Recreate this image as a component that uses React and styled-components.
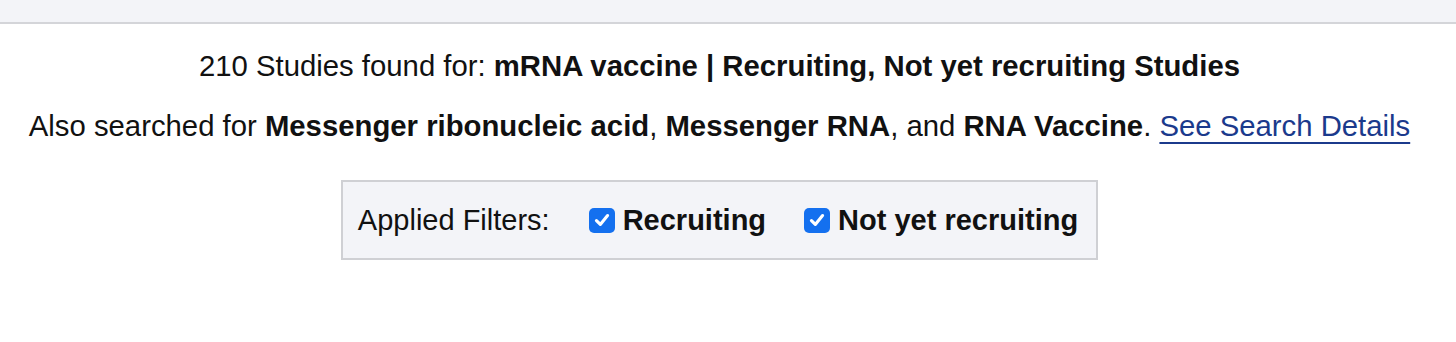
import React from 'react';
import styled, { createGlobalStyle } from 'styled-components';

const GlobalStyle = createGlobalStyle`
  body {
    margin: 0;
    background: #fff;
    font-family: "Liberation Sans", Arial, Helvetica, sans-serif;
    color: #111;
  }
`;

const TopBar = styled.div`
  height: 22px;
  background: #f3f4f8;
  border-bottom: 2px solid #d4d5d9;
`;

const Results = styled.section`
  display: flex;
  flex-direction: column;
  align-items: center;
  padding: 25px 17px 0 0;
`;

const Heading = styled.p`
  margin: 0;
  font-size: 29.3px;
  line-height: 34px;
`;

const AlsoSearched = styled.p`
  margin: 25px 0 0;
  font-size: 29.3px;
  line-height: 36px;
`;

const DetailsLink = styled.a`
  color: #1b3a8c;
  text-decoration: underline;
  text-decoration-thickness: 2px;
  text-underline-offset: 6px;
  cursor: pointer;
`;

const FilterBox = styled.div`
  box-sizing: border-box;
  display: flex;
  align-items: center;
  gap: 38px;
  margin-top: 36px;
  height: 80px;
  padding: 0 18px 0 15px;
  background: #f3f4f8;
  border: 2px solid #cfd0d4;
  font-size: 29px;
`;

const FilterLabel = styled.span`
  margin-right: 1px;
`;

const FilterOption = styled.label`
  display: flex;
  align-items: center;
  gap: 8px;
  font-weight: bold;
`;

const Box = styled.span`
  width: 26px;
  height: 25px;
  border-radius: 5px;
  background: #1470ef;
  display: flex;
  align-items: center;
  justify-content: center;
`;

const Check = () => (
  <svg width="20" height="20" viewBox="0 0 18 18">
    <path
      d="M4 9.5 L7.5 13 L14 5"
      fill="none"
      stroke="#fff"
      strokeWidth="2.8"
      strokeLinecap="round"
      strokeLinejoin="round"
    />
  </svg>
);

const Filter = ({ label }) => (
  <FilterOption>
    <Box>
      <Check />
    </Box>
    {label}
  </FilterOption>
);

export default function App() {
  return (
    <>
      <GlobalStyle />
      <TopBar />
      <Results>
        <Heading>
          210 Studies found for: <b>mRNA vaccine | Recruiting, Not yet recruiting Studies</b>
        </Heading>
        <AlsoSearched>
          Also searched for <b>Messenger ribonucleic acid</b>, <b>Messenger RNA</b>, and{' '}
          <b>RNA Vaccine</b>. <DetailsLink>See Search Details</DetailsLink>
        </AlsoSearched>
        <FilterBox>
          <FilterLabel>Applied Filters:</FilterLabel>
          <Filter label="Recruiting" />
          <Filter label="Not yet recruiting" />
        </FilterBox>
      </Results>
    </>
  );
}
